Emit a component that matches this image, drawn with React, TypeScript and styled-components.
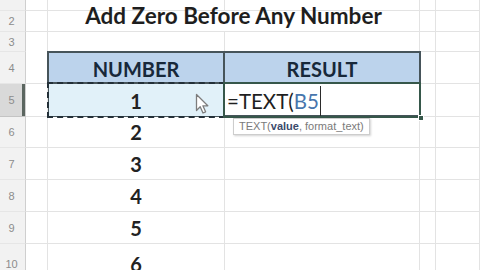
import React from 'react';
import styled, { createGlobalStyle } from 'styled-components';

const GlobalStyle = createGlobalStyle`
  html, body {
    margin: 0;
    padding: 0;
    background: #ffffff;
    overflow: hidden;
  }
  * {
    box-sizing: border-box;
  }
`;

const GRID = '#e3e3e3';
const TABLE_LINE = '#46545a';

// Styles
const Sheet = styled.div`
  display: grid;
  grid-template-columns: 26px 22px 177px 195px 16px 1fr;
  grid-template-rows: 11px 21px 20px 32px 33px 31px 32px 32px 32px 40px;
  width: 480px;
  height: 270px;
  overflow: hidden;
  font-family: Lato, 'Open Sans', sans-serif;
  color: #1f1f1f;
`;

const RowHead = styled.div<{ $active?: boolean }>`
  display: flex;
  align-items: center;
  justify-content: center;
  background: ${(p) => (p.$active ? '#d9d9d9' : '#f2f2f2')};
  border-right: 1px solid #cfcfcf;
  border-bottom: 1px solid ${(p) => (p.$active ? '#c4c4c4' : '#e6e6e6')};
  box-shadow: ${(p) => (p.$active ? 'inset -3px 0 0 #5b6660' : 'none')};
  color: #8c8c8c;
  font-family: 'Liberation Sans', Arial, sans-serif;
  font-size: 11px;
  padding-right: 2px;
`;

const Cell = styled.div<{ $noBottom?: boolean }>`
  display: flex;
  align-items: center;
  justify-content: center;
  border-right: 1px solid ${GRID};
  border-bottom: ${(p) => (p.$noBottom ? 'none' : `1px solid ${GRID}`)};
`;

const Value = styled(Cell)`
  font-size: 20px;
  font-weight: 700;
  color: #222222;
`;

const Title = styled.div`
  grid-column: 3 / 5;
  display: flex;
  align-items: flex-end;
  justify-content: center;
  border-bottom: 1px solid ${GRID};
  border-right: 1px solid ${GRID};
  font-size: 22.5px;
  font-weight: 700;
  color: #1e1e1e;
  line-height: 26px;
  padding-bottom: 2px;
  white-space: nowrap;
`;

const Table = styled.div`
  grid-column: 3 / 5;
  grid-row: 4 / 6;
  display: grid;
  grid-template-columns: 176px 1fr;
  grid-template-rows: 31px 1fr;
  border: 2px solid ${TABLE_LINE};
  margin-left: -1px;
  margin-top: -1px;
  margin-right: -1px;
`;

const HeadCell = styled.div<{ $divider?: boolean }>`
  display: flex;
  align-items: center;
  justify-content: center;
  background: #bcd3ec;
  border-bottom: 2px solid ${TABLE_LINE};
  border-right: ${(p) => (p.$divider ? `2px solid ${TABLE_LINE}` : 'none')};
  font-size: 20px;
  font-weight: 700;
  color: #17283a;
  padding-top: 3px;
`;

const CopiedCell = styled.div`
  position: relative;
  display: flex;
  align-items: center;
  justify-content: center;
  background: #e1f1f9;
  border-right: 2px solid ${TABLE_LINE};
  font-size: 20px;
  font-weight: 700;
  color: #222222;
  padding-top: 2px;

  &::after {
    content: '';
    position: absolute;
    inset: -2px -2px -2px -2px;
    border: 2px dashed #233038;
    pointer-events: none;
  }
`;

const ActiveCell = styled.div`
  position: relative;
  display: flex;
  align-items: center;
  padding-left: 2px;
  padding-top: 2px;
  font-size: 20.5px;
  color: #1f1f1f;

  &::after {
    content: '';
    position: absolute;
    inset: -2px -2px -2px -2px;
    border: 2px solid #36574a;
    pointer-events: none;
  }
`;

const Ref = styled.span`
  color: #4876ad;
`;

const Caret = styled.span`
  display: inline-block;
  width: 1px;
  height: 30px;
  background: #2b2b2b;
  margin-left: 1px;
`;

const FillHandle = styled.span`
  position: absolute;
  right: -5px;
  bottom: -5px;
  width: 6px;
  height: 6px;
  background: #36574a;
  border: 1px solid #ffffff;
  z-index: 2;
`;

const Tip = styled.div`
  position: absolute;
  top: calc(100% + 2px);
  left: 8px;
  padding: 1px 5px 2px;
  background: #ffffff;
  border: 1px solid #cdcdcd;
  box-shadow: 1px 1px 2px rgba(0, 0, 0, 0.18);
  font-family: 'Liberation Sans', Arial, sans-serif;
  font-size: 11px;
  color: #7a7a7a;
  white-space: nowrap;
  z-index: 3;

  b {
    color: #3b4a6b;
  }
`;

const Pointer = styled.svg`
  position: absolute;
  left: 146px;
  top: 9px;
  z-index: 3;
`;

const rows = [6, 7, 8, 9, 10];

const App: React.FC = () => {
  return (
    <>
      <GlobalStyle />
      <Sheet>
        {/* row 1 */}
        <RowHead />
        <Cell />
        <Cell />
        <Cell />
        <Cell />
        <Cell />

        {/* row 2 */}
        <RowHead>2</RowHead>
        <Cell />
        <Title>Add Zero Before Any Number</Title>
        <Cell />
        <Cell />

        {/* row 3 */}
        <RowHead>3</RowHead>
        <Cell $noBottom />
        <Cell $noBottom />
        <Cell $noBottom />
        <Cell />
        <Cell />

        {/* rows 4-5 */}
        <RowHead style={{ gridRow: 4 }}>4</RowHead>
        <Cell style={{ gridRow: 4 }} />
        <Table>
          <HeadCell $divider>NUMBER</HeadCell>
          <HeadCell>RESULT</HeadCell>
          <CopiedCell>
            1
            <Pointer width="14" height="22" viewBox="0 0 14 22">
              <path
                d="M1.5 1.5 L1.5 17.5 L5.2 13.8 L8 20 L10.6 18.8 L7.9 12.8 L12.8 12.8 Z"
                fill="#ffffff"
                stroke="#7d7d7d"
                strokeWidth="1.3"
                strokeLinejoin="round"
              />
            </Pointer>
          </CopiedCell>
          <ActiveCell>
            =TEXT(<Ref>B5</Ref>
            <Caret />
            <FillHandle />
            <Tip>
              TEXT(<b>value</b>, format_text)
            </Tip>
          </ActiveCell>
        </Table>
        <Cell style={{ gridRow: 4, gridColumn: 5 }} />
        <Cell style={{ gridRow: 4, gridColumn: 6 }} />
        <RowHead $active style={{ gridRow: 5 }}>5</RowHead>
        <Cell style={{ gridRow: 5 }} />
        <Cell style={{ gridRow: 5, gridColumn: 5 }} />
        <Cell style={{ gridRow: 5, gridColumn: 6 }} />

        {rows.map((n) => (
          <React.Fragment key={n}>
            <RowHead>{n}</RowHead>
            <Cell />
            <Value>{n - 4}</Value>
            <Cell />
            <Cell />
            <Cell />
          </React.Fragment>
        ))}
      </Sheet>
    </>
  );
};

export default App;
